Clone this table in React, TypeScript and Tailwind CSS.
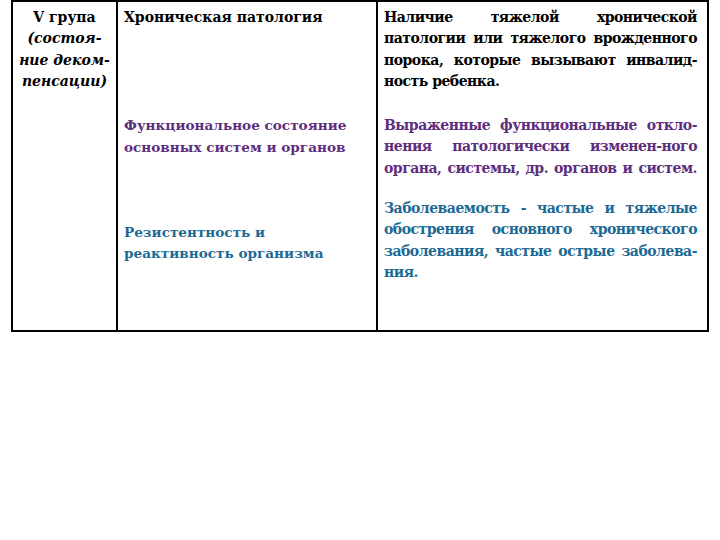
import React from 'react';

const J = ({ children }: { children: React.ReactNode }) => (
  <span className="block whitespace-nowrap text-justify [text-align-last:justify]">{children}</span>
);

const L = ({ children }: { children: React.ReactNode }) => <span className="block whitespace-nowrap">{children}</span>;

export default function App() {
  return (
    <div className="w-[720px] h-[540px] bg-white font-['DejaVu_Serif']">
      <div className="ml-[11px] w-[698px] h-[332px] border-2 border-black grid grid-cols-[103px_260px_331px] text-[14px] leading-[21.3px] font-bold text-black">
        <div className="pt-[5px] text-center">
          <L>V група</L>
          <div className="italic">
            <L>(состоя-</L>
            <L>ние деком-</L>
            <L>пенсации)</L>
          </div>
        </div>

        <div className="border-l-2 border-black pl-[6px] pt-[5px]">
          <p>Хроническая патология</p>
          <p className="mt-[87px] text-[13.6px] text-[#5e2e7e]">
            <L>Функциональное состояние</L>
            <L>основных систем и органов</L>
          </p>
          <p className="mt-[64px] text-[13.6px] text-[#1c6a94]">
            <L>Резистентность и</L>
            <L>реактивность организма</L>
          </p>
        </div>

        <div className="border-l-2 border-black pl-[6px] pr-[10px] pt-[5px] tracking-[-0.5px]">
          <p>
            <J>Наличие тяжелой хронической</J>
            <J>патологии или тяжелого врожденного</J>
            <J>порока, которые вызывают инвалид-</J>
            <L>ность ребенка.</L>
          </p>
          <p className="mt-[23px] text-[#5e2e7e]">
            <J>Выраженные функциональные откло-</J>
            <J>нения патологически изменен-ного</J>
            <J>органа, системы, др. органов и систем.</J>
          </p>
          <p className="mt-[19px] text-[#1c6a94]">
            <J>Заболеваемость - частые и тяжелые</J>
            <J>обострения основного хронического</J>
            <J>заболевания, частые острые заболева-</J>
            <L>ния.</L>
          </p>
        </div>
      </div>
    </div>
  );
}
